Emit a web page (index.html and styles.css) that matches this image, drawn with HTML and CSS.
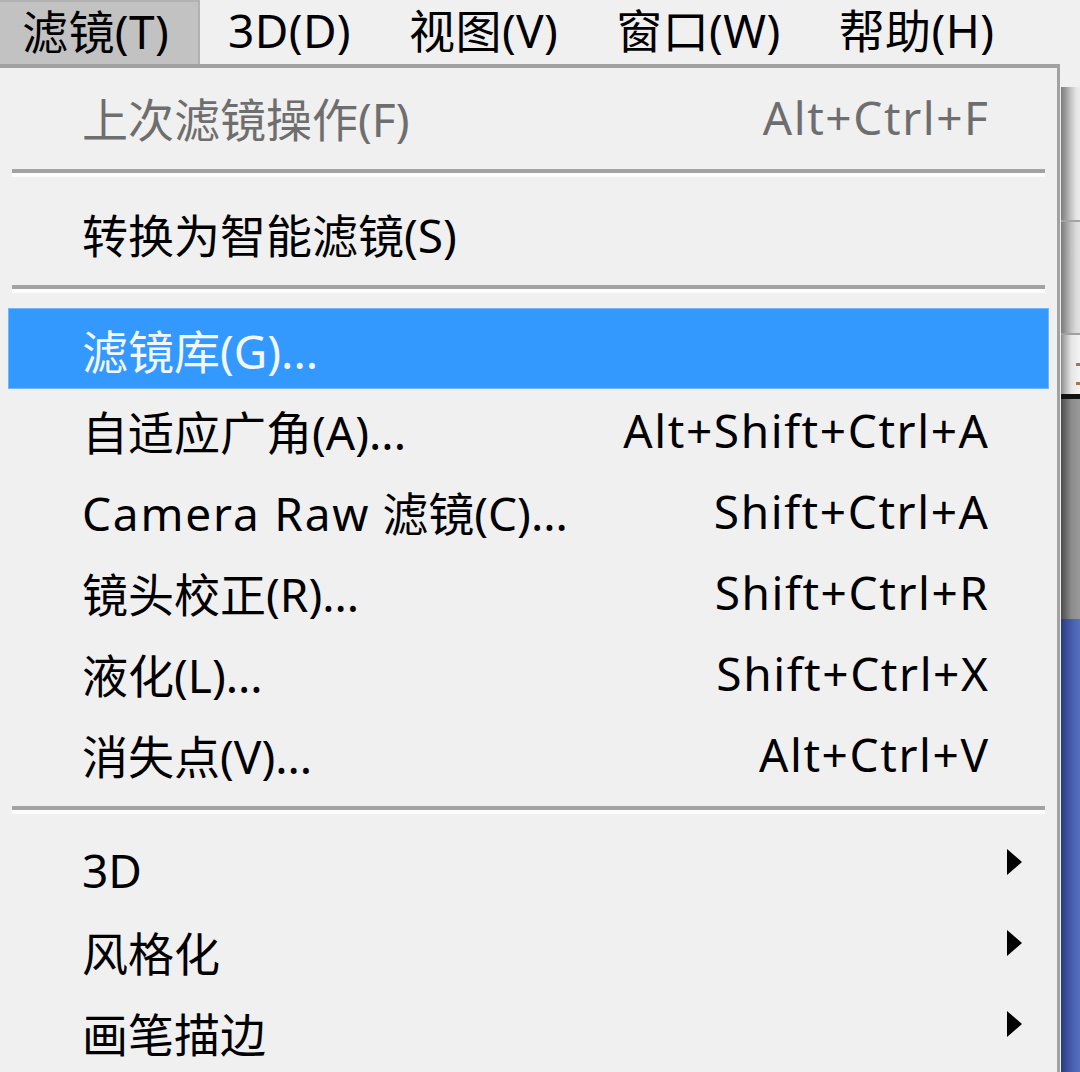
FILE: index.html
```html
<!DOCTYPE html>
<html lang="zh-CN">
<head>
<meta charset="utf-8">
<title>滤镜菜单</title>
<link rel="stylesheet" href="styles.css">
</head>
<body>
<div class="menubar">
  <div class="bar-item open">滤镜(T)</div>
  <div class="bar-item">3D(D)</div>
  <div class="bar-item">视图(V)</div>
  <div class="bar-item">窗口(W)</div>
  <div class="bar-item">帮助(H)</div>
</div>
<div class="stage">
  <div class="menu">
    <div class="row disabled"><span class="label">上次滤镜操作(F)</span><span class="key">Alt+Ctrl+F</span><span class="sub"></span></div>
    <div class="sep"></div>
    <div class="row"><span class="label">转换为智能滤镜(S)</span><span class="key"></span><span class="sub"></span></div>
    <div class="sep"></div>
    <div class="row active"><span class="label">滤镜库(G)...</span><span class="key"></span><span class="sub"></span></div>
    <div class="row"><span class="label">自适应广角(A)...</span><span class="key">Alt+Shift+Ctrl+A</span><span class="sub"></span></div>
    <div class="row"><span class="label"><span class="latin">Camera Raw</span> 滤镜(C)...</span><span class="key">Shift+Ctrl+A</span><span class="sub"></span></div>
    <div class="row"><span class="label">镜头校正(R)...</span><span class="key">Shift+Ctrl+R</span><span class="sub"></span></div>
    <div class="row"><span class="label">液化(L)...</span><span class="key">Shift+Ctrl+X</span><span class="sub"></span></div>
    <div class="row"><span class="label">消失点(V)...</span><span class="key">Alt+Ctrl+V</span><span class="sub"></span></div>
    <div class="sep"></div>
    <div class="row"><span class="label">3D</span><span class="key"></span><span class="sub"><i class="arrow"></i></span></div>
    <div class="row"><span class="label">风格化</span><span class="key"></span><span class="sub"><i class="arrow"></i></span></div>
    <div class="row"><span class="label">画笔描边</span><span class="key"></span><span class="sub"><i class="arrow"></i></span></div>
  </div>
  <div class="backdrop">
    <div class="bd bd-a"></div>
    <div class="bd bd-b"></div>
    <div class="bd bd-c"><i class="bit"></i><i class="bit"></i></div>
    <div class="bd bd-d"></div>
    <div class="bd bd-e"></div>
  </div>
</div>
</body>
</html>
```

FILE: styles.css
```css
html, body {
  margin: 0;
  padding: 0;
}
body {
  width: 1080px;
  height: 1072px;
  overflow: hidden;
  background: #f0f0f0;
  font-family: "Noto Sans", "Noto Sans CJK SC", sans-serif;
  font-size: 46px;
  color: #000;
}
.menubar {
  display: flex;
  height: 64px;
  align-items: stretch;
}
.bar-item {
  display: flex;
  align-items: center;
  padding: 0 30px 4px 28px;
  line-height: 1;
  box-sizing: border-box;
  letter-spacing: 0.4px;
}
.bar-item.open {
  width: 200px;
  padding-left: 22px;
  padding-right: 0;
  background: #c2c2c2;
  border-top: 2px solid #b2b2b2;
  border-right: 2px solid #b2b2b2;
}
.stage {
  display: flex;
  align-items: flex-start;
}
.menu {
  width: 1060px;
  flex: none;
  box-sizing: border-box;
  border-top: 4px solid #a2a2a2;
  border-right: 3px solid #a2a2a2;
  padding: 8px 8px 0 8px;
  height: 1008px;
}
.row {
  display: grid;
  grid-template-columns: 1fr auto 61px;
  align-items: center;
  height: 81px;
  box-sizing: border-box;
  padding-left: 74px;
  white-space: nowrap;
}
.row.active {
  background: #3399ff;
  border: 1px solid #6fb6ff;
  padding-left: 73px;
  color: #f2f7ff;
}
.row.disabled {
  color: #6e6e6e;
}
.latin {
  letter-spacing: 1.8px;
}
.key {
  text-align: right;
  letter-spacing: 1.6px;
  margin-right: -1.6px;
}
.sub {
  display: flex;
  align-items: center;
  height: 100%;
}
.arrow {
  display: block;
  width: 0;
  height: 0;
  margin-left: 19px;
  margin-top: -16px;
  border-left: 15px solid #000;
  border-top: 13px solid transparent;
  border-bottom: 13px solid transparent;
}
.sep {
  height: 4px;
  margin: 12px 4px 15px 4px;
  background: #a2a2a2;
  border-bottom: 4px solid #fcfcfc;
}
.backdrop {
  flex: 1;
  margin-top: 23px;
  margin-left: 1px;
  display: flex;
  flex-direction: column;
  height: 985px;
}
.bd {
  flex: none;
}
.bd-a {
  height: 133px;
  background: linear-gradient(to right, #7c7c7c, #9c9c9c 25%, #c8c8c8 55%, #e4e4e4 80%, #ececec);
  border-bottom: 2px solid #a4a4a4;
}
.bd-b {
  height: 111px;
  background: linear-gradient(to right, #7a7a7a, #9a9a9a 25%, #c4c4c4 55%, #dadada 80%, #e2e2e2);
  border-bottom: 2px solid #a0a0a0;
}
.bd-c {
  height: 59px;
  position: relative;
  background: linear-gradient(to right, #8a8a8a, #b8b8b8 25%, #e6e6e6 55%, #f4f4f4);
  border-bottom: 5px solid #111;
}
.bit {
  position: absolute;
  right: 0;
  width: 4px;
  height: 3px;
  background: #b0724a;
}
.bit:first-child { top: 28px; }
.bit:last-child { top: 47px; }
.bd-d {
  height: 220px;
  background: linear-gradient(to right, #4c4c4c, #6a6a6a 25%, #8c8c8c 55%, #9a9a9a);
}
.bd-e {
  flex: 1;
  background: linear-gradient(to right, #2a3a74, #3a4f9c 30%, #4a62b2 65%, #5570bf);
}
```
